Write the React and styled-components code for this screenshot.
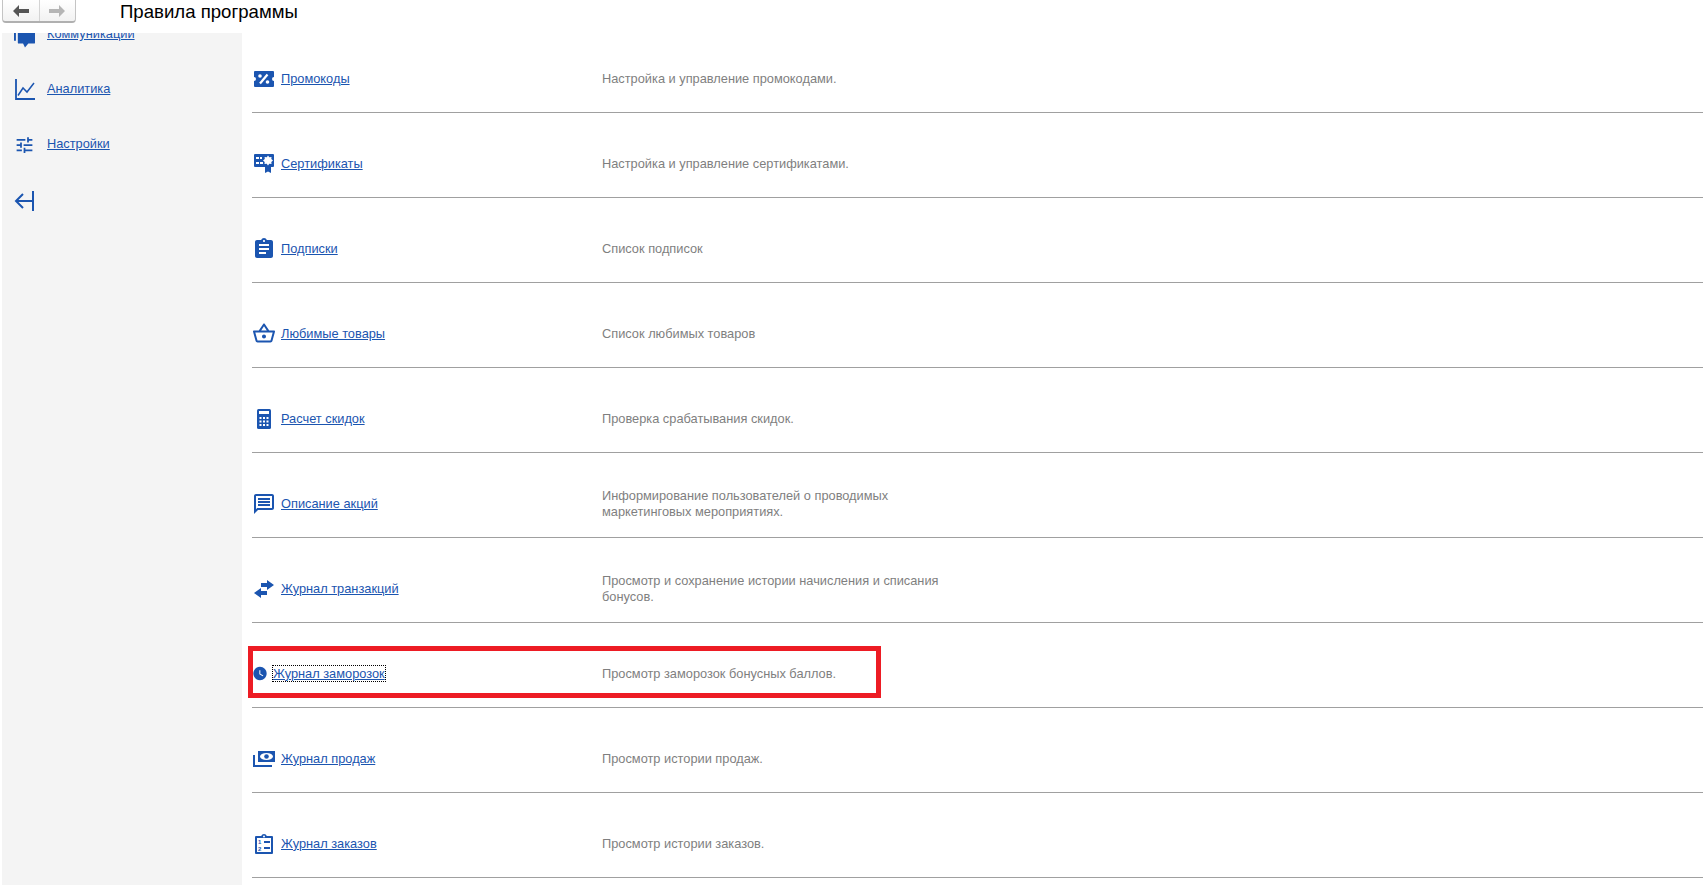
import React from "react";
import styled, { createGlobalStyle } from "styled-components";
import {
  MdAssignment,
  MdOutlineShoppingBasket,
  MdOutlineMessage,
  MdWatchLater,
  MdTune,
} from "react-icons/md";

const BLUE = "#1b55b0";

const Global = createGlobalStyle`
  html, body {
    margin: 0;
    height: 885px;
    overflow: hidden;
    background: #fff;
    font-family: "Liberation Sans", Arial, sans-serif;
  }
`;

const Ticket = () => (
  <svg width="20" height="16" viewBox="0 0 20 16">
    <path fill={BLUE} d="M1 0h18a1 1 0 0 1 1 1v5a2 2 0 0 0 0 4v5a1 1 0 0 1-1 1H1a1 1 0 0 1-1-1v-5a2 2 0 0 0 0-4V1a1 1 0 0 1 1-1z" />
    <path stroke="#fff" strokeWidth="2.200" d="M6 12.500L13.500 3.500" />
    <circle cx="6" cy="5" r="1.800" fill="#fff" />
    <circle cx="13.500" cy="11" r="1.800" fill="#fff" />
  </svg>
);

const Certificate = () => (
  <svg width="20" height="20" viewBox="0 0 20 20">
    <path fill={BLUE} d="M1 0h18a1 1 0 0 1 1 1v11a1 1 0 0 1-1 1h-2v6l-3-1.500-3 1.500v-6H1a1 1 0 0 1-1-1V1a1 1 0 0 1 1-1z" />
    <path fill="#fff" d="M2 3h3v2H2zM2 8h3v2H2zM6 8h3v2H6zM6 3h2v2H6z" />
    <path fill="#fff" d="M14 1.500l1.300 1.800 2.200-.4-.2 2.200L19 6.500l-1.700 1.400.2 2.200-2.200-.4-1.300 1.800-1.300-1.800-2.200.4.200-2.200L9 6.500l1.800-1.400-.2-2.200 2.200.4z" />
  </svg>
);

const Calculator = () => (
  <svg width="14" height="20" viewBox="0 0 14 20">
    <rect width="14" height="20" rx="1.500" fill={BLUE} />
    <path fill="#fff" d="M2 2h10v3H2zM2.500 8h2v2h-2zM6 8h2v2H6zM9.500 8h2v2h-2zM2.500 11.500h2v2h-2zM6 11.500h2v2H6zM9.500 11.500h2v2h-2zM2.500 15h2v2h-2zM6 15h2v2H6zM9.500 15h2v2h-2z" />
  </svg>
);

const Swap = () => (
  <svg width="20" height="18" viewBox="0 0 20 18">
    <path fill={BLUE} d="M13 0l7 5-7 5V7H7V3h6zM7 8v3h6v4H7v3l-7-5z" />
  </svg>
);

const Money = () => (
  <svg width="22" height="16" viewBox="0 0 22 16">
    <path fill={BLUE} d="M5 0h17v11H5z" />
    <ellipse cx="13.500" cy="5.500" rx="6.500" ry="3.500" fill="#fff" />
    <circle cx="13.500" cy="5.500" r="2.300" fill={BLUE} />
    <path fill={BLUE} d="M0 4h2v10h17v2H0z" />
  </svg>
);

const Orders = () => (
  <svg width="18" height="20" viewBox="0 0 18 20">
    <path fill={BLUE} d="M1 2h5.200a3 3 0 0 1 5.600 0H17a1 1 0 0 1 1 1v16a1 1 0 0 1-1 1H1a1 1 0 0 1-1-1V3a1 1 0 0 1 1-1z" />
    <path fill="#fff" d="M2 4h14v14H2z" />
    <circle cx="9" cy="2.500" r="1" fill="#fff" />
    <path fill={BLUE} d="M9 7h6v2H9zM9 13h6v2H9z" />
    <text x="3" y="10" fontSize="6" fontWeight="700" fill={BLUE} fontFamily="Liberation Sans">1</text>
    <text x="3" y="16.500" fontSize="6" fontWeight="700" fill={BLUE} fontFamily="Liberation Sans">2</text>
  </svg>
);

const Bubble = () => (
  <svg width="22" height="26" viewBox="0 0 22 26">
    <path fill={BLUE} d="M4 0h17a1 1 0 0 1 1 1v20a1 1 0 0 1-1 1h-6l-3.500 4-2-4H5a1 1 0 0 1-1-1zM0 7h2v12H0z" />
  </svg>
);

const Chart = () => (
  <svg width="20" height="21" viewBox="0 0 20 21">
    <path fill="none" stroke={BLUE} strokeWidth="1.800" d="M1 0v20h19" />
    <path fill="none" stroke={BLUE} strokeWidth="1.500" d="M3 16.500L8 9l4 4 7-9" />
  </svg>
);

const Collapse = () => (
  <svg width="20" height="20" viewBox="0 0 20 20">
    <path fill="none" stroke={BLUE} strokeWidth="2" d="M19 0v20M19 10H2M9 3l-7 7 7 7" />
  </svg>
);

const sideItems = [
  { title: "Коммуникации", icon: <Bubble /> },
  { title: "Аналитика", icon: <Chart /> },
  { title: "Настройки", icon: <MdTune size={24} color={BLUE} /> },
];

const rows = [
  { title: "Промокоды", desc: "Настройка и управление промокодами.", icon: <Ticket /> },
  { title: "Сертификаты", desc: "Настройка и управление сертификатами.", icon: <Certificate /> },
  { title: "Подписки", desc: "Список подписок", icon: <MdAssignment size={24} color={BLUE} /> },
  { title: "Любимые товары", desc: "Список любимых товаров", icon: <MdOutlineShoppingBasket size={25} color={BLUE} /> },
  { title: "Расчет скидок", desc: "Проверка срабатывания скидок.", icon: <Calculator /> },
  { title: "Описание акций", desc: "Информирование пользователей о проводимых маркетинговых мероприятиях.", icon: <MdOutlineMessage size={24} color={BLUE} /> },
  { title: "Журнал транзакций", desc: "Просмотр и сохранение истории начисления и списания бонусов.", icon: <Swap /> },
  { title: "Журнал заморозок", desc: "Просмотр заморозок бонусных баллов.", icon: <MdWatchLater size={17} color={BLUE} />, active: true },
  { title: "Журнал продаж", desc: "Просмотр истории продаж.", icon: <Money /> },
  { title: "Журнал заказов", desc: "Просмотр истории заказов.", icon: <Orders /> },
];

export default function App() {
  return (
    <Page>
      <Global />
      <Header>
        <NavGroup>
          <NavButton>
            <svg width="16" height="12" viewBox="0 0 16 12">
              <path fill="#555" d="M6 0v4h10v4H6v4L0 6z" />
            </svg>
          </NavButton>
          <NavButton $disabled>
            <svg width="16" height="12" viewBox="0 0 16 12">
              <path fill="#b5b5b5" d="M10 0v4H0v4h10v4l6-6z" />
            </svg>
          </NavButton>
        </NavGroup>
        <Title>Правила программы</Title>
      </Header>
      <Body>
        <Sidebar>
          {sideItems.map((item) => (
            <SideItem key={item.title}>
              <SideIcon>{item.icon}</SideIcon>
              <SideLink>{item.title}</SideLink>
            </SideItem>
          ))}
          <CollapseRow>
            <Collapse />
          </CollapseRow>
        </Sidebar>
        <Content>
          {rows.map((row) => (
            <Row key={row.title}>
              <RowIcon $active={row.active}>{row.icon}</RowIcon>
              <LinkCell $active={row.active}>
                <RowLink $active={row.active}>{row.title}</RowLink>
              </LinkCell>
              <Desc>{row.desc}</Desc>
              {row.active && <Highlight />}
            </Row>
          ))}
        </Content>
      </Body>
    </Page>
  );
}

const Page = styled.div`
  height: 885px;
  display: flex;
  flex-direction: column;
  overflow: hidden;
`;

const Header = styled.header`
  height: 33px;
  flex-shrink: 0;
  display: flex;
  align-items: flex-start;
  padding-left: 2px;
  background: #fff;
`;

const NavGroup = styled.div`
  display: flex;
  width: 74px;
  height: 23px;
  box-sizing: border-box;
  border: 1px solid #c4c4c4;
  border-top: none;
  border-bottom: 2px solid #b0b0b0;
  border-radius: 0 0 4px 4px;
  background: linear-gradient(#ffffff, #f2f2f2);
`;

const NavButton = styled.div`
  flex: 1;
  display: flex;
  align-items: center;
  justify-content: center;
  border-left: ${(p) => (p.$disabled ? "1px solid #d4d4d4" : "none")};
`;

const Title = styled.h1`
  margin: 0 0 0 44px;
  font-size: 18.6px;
  font-weight: 400;
  line-height: 24px;
  color: #000;
`;

const Body = styled.div`
  flex: 1;
  display: flex;
  overflow: hidden;
`;

const Sidebar = styled.aside`
  width: 240px;
  margin: 0 10px 0 2px;
  flex-shrink: 0;
  background: #f4f4f4;
  overflow: hidden;
`;

const SideItem = styled.div`
  display: flex;
  align-items: center;
  height: 55px;
  padding-left: 12px;
  &:first-child {
    margin-top: -27px;
  }
`;

const SideIcon = styled.span`
  width: 21px;
  display: flex;
  justify-content: center;
  margin-right: 12px;
  padding-top: 2px;
`;

const SideLink = styled.a`
  font-size: 12.8px;
  color: ${BLUE};
  text-decoration: underline;
`;

const CollapseRow = styled.div`
  padding: 20px 0 0 12px;
  display: flex;
`;

const Content = styled.main`
  flex: 1;
  margin-top: -5px;
`;

const Row = styled.div`
  position: relative;
  height: 85px;
  box-sizing: border-box;
  padding-top: 17px;
  display: flex;
  align-items: center;
  border-bottom: 1px solid #a0a0a0;
`;

const RowIcon = styled.span`
  width: ${(p) => (p.$active ? "16px" : "24px")};
  margin-right: ${(p) => (p.$active ? "5px" : "5px")};
  display: flex;
  align-items: center;
  justify-content: center;
  flex-shrink: 0;
`;

const LinkCell = styled.div`
  flex: 0 0 auto;
  width: ${(p) => (p.$active ? "329px" : "321px")};
  font-size: 12.8px;
  line-height: 16px;
`;

const RowLink = styled.a`
  color: ${BLUE};
  text-decoration: underline;
  ${(p) => p.$active && "outline: 1px dotted #000;"}
`;

const Desc = styled.div`
  width: 345px;
  font-size: 12.8px;
  line-height: 16px;
  color: #7f7f7f;
`;

const Highlight = styled.div`
  position: absolute;
  left: -4px;
  top: 23px;
  width: 633px;
  height: 52px;
  box-sizing: border-box;
  border: 5px solid #ed1c24;
  pointer-events: none;
`;
